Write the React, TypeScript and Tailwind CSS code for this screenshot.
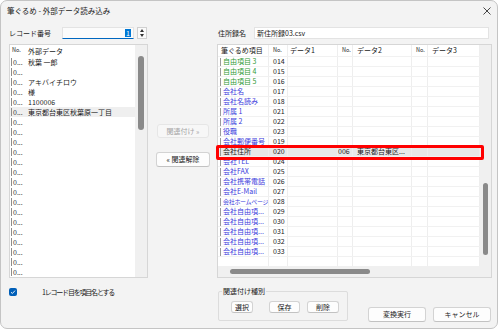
import React from "react";

type Row = { name: string; no: string; tone: "g" | "b" | "k"; no2?: string; d2?: string };

const fieldRows: Row[] = [
  { name: "自由項目 3", no: "014", tone: "g" },
  { name: "自由項目 4", no: "015", tone: "g" },
  { name: "自由項目 5", no: "016", tone: "g" },
  { name: "会社名", no: "017", tone: "b" },
  { name: "会社名読み", no: "018", tone: "b" },
  { name: "所属 1", no: "021", tone: "b" },
  { name: "所属 2", no: "022", tone: "b" },
  { name: "役職", no: "023", tone: "b" },
  { name: "会社郵便番号", no: "019", tone: "b" },
  { name: "会社住所", no: "020", tone: "k", no2: "006", d2: "東京都台東区..." },
  { name: "会社TEL", no: "024", tone: "b" },
  { name: "会社FAX", no: "025", tone: "b" },
  { name: "会社携帯電話", no: "026", tone: "b" },
  { name: "会社E-Mail", no: "027", tone: "b" },
  { name: "会社ホームページ", no: "028", tone: "b" },
  { name: "会社自由項...", no: "029", tone: "b" },
  { name: "会社自由項...", no: "030", tone: "b" },
  { name: "会社自由項...", no: "031", tone: "b" },
  { name: "会社自由項...", no: "032", tone: "b" },
  { name: "会社自由項...", no: "033", tone: "b" },
  { name: "", no: "", tone: "b" },
];

const sourceRows = ["秋葉 一郎", "", "アキバイチロウ", "様", "1100006", "東京都台東区秋葉原一丁目", ...Array(16).fill("")];

const toneClass = { g: "text-[#2f9a36]", b: "text-[#3b3bdc]", k: "text-[#1a1a1a]" };

function Btn({ children, className = "" }: { children: React.ReactNode; className?: string }) {
  return (
    <div
      className={`flex items-center justify-center rounded-[3px] border border-[#d3d3d3] border-b-[#c2c2c2] bg-[#fdfdfd] ${className}`}
    >
      {children}
    </div>
  );
}

export default function App() {
  return (
    <div className="w-[500px] h-[330px] bg-white font-['Noto_Sans_CJK_JP','Noto_Sans',sans-serif] text-[7px] leading-none text-[#1a1a1a]">
      <div className="w-[498px] h-[329px] rounded-[7px] border border-[#c4c4c4] bg-[#f3f3f3] flex flex-col overflow-hidden">
        {/* title bar */}
        <div className="h-[19px] flex items-center justify-between pl-[6px] pr-[6px] shrink-0">
          <span className="text-[7.5px]">筆ぐるめ - 外部データ読み込み</span>
          <svg width="8" height="8" viewBox="0 0 8 8" className="mt-[1px]">
            <path d="M0.5 0.5L7.5 7.5M7.5 0.5L0.5 7.5" stroke="#333" strokeWidth="0.9" />
          </svg>
        </div>

        {/* record number / file name */}
        <div className="mt-[7px] h-[12px] flex pl-[8px] shrink-0">
          <div className="w-[139px] flex items-center">
            <span className="w-[53px]">レコード番号</span>
            <div className="w-[72px] h-[12px] bg-[#fbfbfb] border border-[#e3e3e3] border-b-[#0067c0] flex items-center justify-end pr-[2px]">
              <span className="bg-[#0078d4] text-white px-[1px] h-[8px] flex items-center">1</span>
            </div>
            <div className="ml-[3px] w-[10px] h-[12px] border border-[#d0d0d0] bg-[#fafafa] flex flex-col items-center justify-center gap-[2px]">
              <svg width="4" height="3" viewBox="0 0 4 3"><path d="M2 0L4 3H0z" fill="#333" /></svg>
              <svg width="4" height="3" viewBox="0 0 4 3"><path d="M0 0H4L2 3z" fill="#333" /></svg>
            </div>
          </div>
          <div className="ml-[69px] w-[275px] flex items-center">
            <span className="w-[37px] pl-[1px]">住所録名</span>
            <div className="w-[235px] h-[12px] bg-white border border-[#e3e3e3] flex items-center pl-[2px]">新住所録03.csv</div>
          </div>
        </div>

        {/* lists */}
        <div className="mt-[5px] h-[234px] flex pl-[8px] shrink-0">
          {/* source list */}
          <div className="w-[139px] h-full border border-[#d6d6d6] bg-white flex">
            <div className="flex-1 flex flex-col overflow-hidden">
              <div className="h-[12px] flex items-center shrink-0">
                <span className="w-[16px] pl-[2px] text-[5.5px]">No.</span>
                <span className="pl-[2px]">外部データ</span>
              </div>
              {sourceRows.map((t, i) => (
                <div key={i} className={`h-[10px] flex items-center shrink-0 ${i === 5 ? "bg-[#efefef]" : ""}`}>
                  <span className="w-[16px] flex items-center">
                    <span className="ml-[1px] w-[1px] h-[8px] bg-[#8c8c8c]" />
                    <span className="ml-[1px] text-[#333]">0...</span>
                  </span>
                  <span className="pl-[2px] whitespace-nowrap">{t}</span>
                </div>
              ))}
            </div>
            <div className="w-[12px] bg-[#f0f0f0] pt-[11px] pl-[3px]">
              <div className="w-[6px] h-[74px] rounded-[3px] bg-[#8a8a8a]" />
            </div>
          </div>

          {/* middle buttons */}
          <div className="ml-[8px] w-[54px] flex flex-col">
            <div className="mt-[80px] ml-[1px] w-[52px] h-[14px] rounded-[3px] border border-[#e6e6e6] bg-[#f7f7f7] text-[#a6a6a6] flex items-center justify-center">
              関連付け »
            </div>
            <Btn className="mt-[14px] w-[54px] h-[15px]">« 関連解除</Btn>
          </div>

          {/* mapping table */}
          <div className="relative ml-[7px] w-[275px] h-full border border-[#d6d6d6] bg-white flex">
            <div className="w-[262px] flex flex-col">
              <div className="h-[221px] flex flex-col overflow-hidden">
                <div className="h-[12px] flex shrink-0 border-b border-[#f1f1f1]">
                  <div className="w-[51px] border-r border-[#eeeeee] flex items-center pl-[3px] whitespace-nowrap">筆ぐるめ項目</div>
                  <div className="w-[19px] border-r border-[#eeeeee] flex items-center pl-[4px] text-[5.5px]">No.</div>
                  <div className="w-[50px] border-r border-[#eeeeee] flex items-center pl-[2px]">データ1</div>
                  <div className="w-[15px] border-r border-[#eeeeee] flex items-center pl-[4px] text-[5.5px]">No.</div>
                  <div className="w-[59px] border-r border-[#eeeeee] flex items-center pl-[4px]">データ2</div>
                  <div className="w-[16px] border-r border-[#eeeeee] flex items-center pl-[4px] text-[5.5px]">No.</div>
                  <div className="w-[52px] border-r border-[#eeeeee] flex items-center pl-[4px]">データ3</div>
                </div>
                {fieldRows.map((r, i) => (
                  <div key={i} className={`h-[10px] flex shrink-0 border-b border-[#f1f1f1] ${i === 9 ? "bg-[#e8e8e8]" : ""}`}>
                    <div className="w-[51px] border-r border-[#eeeeee] flex items-center overflow-hidden">
                      {r.name && <span className="ml-[2px] w-[1px] h-[8px] bg-[#9a9a9a] shrink-0" />}
                      <span className={`ml-[2px] whitespace-nowrap ${toneClass[r.tone]} ${r.name === "会社ホームページ" ? "text-[6px] tracking-[-0.3px]" : ""}`}>
                        {r.name}
                      </span>
                    </div>
                    <div className="w-[19px] border-r border-[#eeeeee] flex items-center pl-[4px]">{r.no}</div>
                    <div className="w-[50px] border-r border-[#eeeeee]" />
                    <div className="w-[15px] border-r border-[#eeeeee] flex items-center">{r.no2}</div>
                    <div className="w-[59px] border-r border-[#eeeeee] flex items-center pl-[4px] whitespace-nowrap">{r.d2}</div>
                    <div className="w-[16px] border-r border-[#eeeeee]" />
                    <div className="w-[52px] border-r border-[#eeeeee]" />
                  </div>
                ))}
              </div>
              <div className="flex-1 bg-[#f0f0f0] pt-[3px] pl-[12px]">
                <div className="w-[140px] h-[5px] rounded-[3px] bg-[#8a8a8a]" />
              </div>
            </div>
            <div className="flex-1 bg-[#f0f0f0] pt-[138px] pl-[3px]">
              <div className="w-[5px] h-[72px] rounded-[3px] bg-[#8a8a8a]" />
            </div>
            {/* highlight frame */}
            <div className="absolute left-[-2px] top-[100px] w-[268px] h-[15px] rounded-[2px] border-[3px] border-[#ff0000]" />
          </div>
        </div>

        {/* footer */}
        <div className="mt-[8px] h-[36px] flex pl-[8px] shrink-0">
          <div className="w-[139px] flex items-start">
            <div className="mt-[2px] w-[8px] h-[8px] rounded-[2px] bg-[#005fb8] flex items-center justify-center">
              <svg width="6" height="6" viewBox="0 0 6 6">
                <path d="M1 3.2L2.4 4.5L5 1.6" stroke="white" strokeWidth="0.9" fill="none" />
              </svg>
            </div>
            <span className="ml-[25px] mt-[3px] whitespace-nowrap tracking-[-1.2px]">1レコード目を項目名とする</span>
          </div>
          <div className="relative ml-[70px] mt-[5px] w-[130px] h-[30px] rounded-[2px] border border-[#dcdcdc] flex items-start pl-[12px] pt-[9px]">
            <span className="absolute left-[3px] top-[-4px] bg-[#f3f3f3] px-[1px]">関連付け種別</span>
            <Btn className="w-[22px] h-[12px]">選択</Btn>
            <Btn className="ml-[16px] w-[31px] h-[12px]">保存</Btn>
            <Btn className="ml-[7px] w-[32px] h-[12px]">削除</Btn>
          </div>
          <Btn className="ml-[20px] mt-[21px] w-[58px] h-[15px] border-[#5b9bd5] border-b-[#0067c0]">変換実行</Btn>
          <Btn className="ml-[7px] mt-[21px] w-[58px] h-[15px]">キャンセル</Btn>
        </div>
      </div>
    </div>
  );
}
